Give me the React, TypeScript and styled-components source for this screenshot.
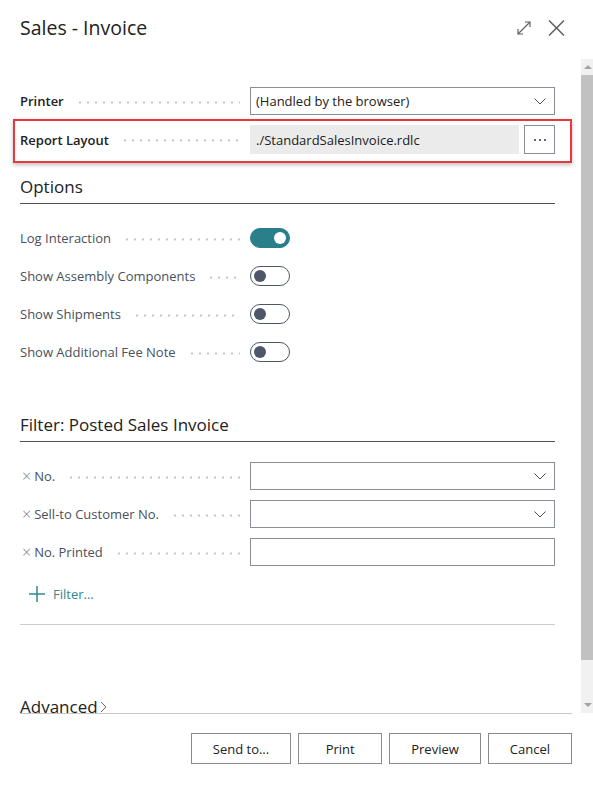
import React from 'react';
import styled, { createGlobalStyle, css } from 'styled-components';

const GlobalStyle = createGlobalStyle`
  html, body {
    margin: 0;
    padding: 0;
    background: #ffffff;
  }
  body {
    font-family: 'Open Sans', 'Noto Sans', sans-serif;
    color: #212121;
  }
`;

const Dialog = styled.div`
  width: 593px;
  height: 786px;
  display: flex;
  flex-direction: column;
  background: #ffffff;
  overflow: hidden;
`;

const Header = styled.header`
  height: 59px;
  box-sizing: border-box;
  padding: 16px 28px 0 20px;
  display: flex;
  align-items: flex-start;
  justify-content: space-between;
`;

const Title = styled.h1`
  margin: 0;
  font-size: 19.5px;
  line-height: 24px;
  font-weight: 400;
  color: #212121;
`;

const HeaderActions = styled.div`
  display: flex;
  align-items: center;
  gap: 16px;
  height: 24px;
`;

const IconButton = styled.button`
  border: 0;
  padding: 0;
  background: none;
  display: flex;
  align-items: center;
  justify-content: center;
  color: #616161;
`;

const Body = styled.div`
  height: 654px;
  display: flex;
  flex-shrink: 0;
`;

const ScrollContent = styled.div`
  flex: 1;
  overflow: hidden;
  box-sizing: border-box;
  padding: 28px 26px 0 20px;
`;

const Scrollbar = styled.div`
  width: 12px;
  background: #f1f1f1;
  display: flex;
  flex-direction: column;
`;

const ScrollArrow = styled.div<{ $down?: boolean }>`
  height: 16px;
  flex-shrink: 0;
  display: flex;
  align-items: center;
  justify-content: center;
  padding-left: 2px;

  &::before {
    content: '';
    border-left: 4px solid transparent;
    border-right: 4px solid transparent;
    ${({ $down }) =>
      $down
        ? css`border-top: 4px solid #a3a3a3;`
        : css`border-bottom: 4px solid #a3a3a3;`}
  }
`;

const ScrollThumb = styled.div`
  height: 585px;
  flex-shrink: 0;
  background: #c1c1c1;
`;

const ScrollTrack = styled.div`
  flex: 1;
`;

const FieldRow = styled.div<{ $highlight?: boolean }>`
  position: relative;
  display: grid;
  grid-template-columns: 230px 1fr;
  align-items: center;
  height: 28px;
  margin-bottom: 10px;

  ${({ $highlight }) =>
    $highlight &&
    css`
      &::after {
        content: '';
        position: absolute;
        top: -6px;
        bottom: -10px;
        left: -7px;
        right: -17px;
        border: 2px solid #e8383d;
        box-shadow: 0 2px 4px rgba(0, 0, 0, 0.25);
        pointer-events: none;
      }
    `}
`;

const Label = styled.div<{ $strong?: boolean }>`
  display: flex;
  align-items: center;
  font-size: 13px;
  white-space: nowrap;
  color: ${({ $strong }) => ($strong ? '#212121' : '#4a505c')};
  font-weight: ${({ $strong }) => ($strong ? 600 : 400)};
`;

const RemoveMark = styled.span`
  color: #7d828c;
  font-size: 16px;
  font-weight: 300;
  line-height: 1;
  margin: 0 3px 0 2px;
`;

const Leader = styled.span`
  flex: 1;
  height: 3px;
  margin: 2px 10px 0 12px;
  background: radial-gradient(circle, #c4c4c4 0.9px, transparent 1.3px) 0 50% / 8px 3px repeat-x;
`;

const Field = styled.div<{ $readOnly?: boolean }>`
  height: 28px;
  box-sizing: border-box;
  display: flex;
  align-items: center;
  padding: 0 8px 0 5px;
  font-size: 13px;
  color: #212121;

  & > svg {
    margin-left: auto;
  }

  ${({ $readOnly }) =>
    $readOnly
      ? css`
          background: #ebebeb;
          border: 1px solid #ebebeb;
        `
      : css`
          background: #ffffff;
          border: 1px solid #8a8e99;
        `}
`;

const FieldGroup = styled.div`
  display: flex;
  gap: 5px;
  height: 29px;

  & > ${Field} {
    flex: 1;
    height: 29px;
  }
`;

const MoreButton = styled.button`
  width: 31px;
  height: 29px;
  box-sizing: border-box;
  border: 1px solid #8a8e99;
  background: #ffffff;
  padding: 0;
  display: flex;
  align-items: center;
  justify-content: center;
  gap: 3px;

  span {
    width: 2px;
    height: 2px;
    border-radius: 50%;
    background: #333333;
  }
`;

const SectionHeading = styled.h2<{ $gap: number }>`
  margin: ${({ $gap }) => $gap}px 0 20px;
  padding-bottom: 4px;
  font-size: 17px;
  line-height: 24px;
  font-weight: 400;
  color: #212121;
  border-bottom: 1px solid #505050;
`;

const Toggle = styled.span<{ $on?: boolean }>`
  width: 40px;
  height: 20px;
  box-sizing: border-box;
  border-radius: 10px;
  display: flex;
  align-items: center;
  padding: 0 3px;
  justify-content: ${({ $on }) => ($on ? 'flex-end' : 'flex-start')};
  background: ${({ $on }) => ($on ? '#2a7f8a' : '#ffffff')};
  border: 1px solid ${({ $on }) => ($on ? '#2a7f8a' : '#4f5669')};

  &::before {
    content: '';
    width: 12px;
    height: 12px;
    border-radius: 50%;
    background: ${({ $on }) => ($on ? '#ffffff' : '#4f5669')};
  }
`;

const AddFilter = styled.div`
  display: flex;
  align-items: center;
  gap: 8px;
  height: 28px;
  margin: 14px 0 16px 9px;
  font-size: 13px;
  color: #2f8790;
`;

const Divider = styled.div`
  height: 1px;
  background: #c8ccd2;
`;

const Advanced = styled.div`
  margin-top: 70px;
  display: flex;
  align-items: center;
  gap: 2px;
  font-size: 17px;
  line-height: 24px;
  color: #212121;
`;

const Footer = styled.footer`
  flex: 1;
  margin: 0 21px 0 20px;
  border-top: 1px solid #c6c6c6;
  padding-top: 19px;
  display: flex;
  justify-content: flex-end;
  align-items: flex-start;
  gap: 7px;
`;

const ActionButton = styled.button`
  height: 31px;
  min-width: 84px;
  box-sizing: border-box;
  padding: 0 21px;
  border: 1px solid #8a8a8a;
  background: #ffffff;
  font-family: inherit;
  font-size: 13px;
  color: #212121;
`;

const Chevron = () => (
  <svg width="12" height="7" viewBox="0 0 12 7">
    <polyline points="0.5,0.5 6,6 11.5,0.5" fill="none" stroke="#505050" strokeWidth="1" />
  </svg>
);

const ExpandIcon = () => (
  <svg width="16" height="15" viewBox="0 0 16 15">
    <g fill="none" stroke="#616161" strokeWidth="1.2">
      <line x1="2" y1="13" x2="14" y2="1" />
      <polyline points="9,1 14,1 14,6" />
      <polyline points="2,8 2,13 7,13" />
    </g>
  </svg>
);

const CloseIcon = () => (
  <svg width="17" height="16" viewBox="0 0 17 16">
    <g stroke="#616161" strokeWidth="1.5">
      <line x1="1" y1="0.5" x2="16" y2="15.5" />
      <line x1="16" y1="0.5" x2="1" y2="15.5" />
    </g>
  </svg>
);

const PlusIcon = () => (
  <svg width="16" height="16" viewBox="0 0 16 16">
    <g stroke="#2f8790" strokeWidth="1.5">
      <line x1="8" y1="0" x2="8" y2="16" />
      <line x1="0" y1="8" x2="16" y2="8" />
    </g>
  </svg>
);

const AdvancedChevron = () => (
  <svg width="8" height="12" viewBox="0 0 8 12">
    <polyline points="1,1 6,6 1,11" fill="none" stroke="#6b6b6b" strokeWidth="1" />
  </svg>
);

const options = [
  { label: 'Log Interaction', on: true },
  { label: 'Show Assembly Components', on: false },
  { label: 'Show Shipments', on: false },
  { label: 'Show Additional Fee Note', on: false },
];

const filters = [
  { label: 'No.', lookup: true },
  { label: 'Sell-to Customer No.', lookup: true },
  { label: 'No. Printed', lookup: false },
];

export default function App() {
  return (
    <>
      <GlobalStyle />
      <Dialog>
        <Header>
          <Title>Sales - Invoice</Title>
          <HeaderActions>
            <IconButton aria-label="Expand">
              <ExpandIcon />
            </IconButton>
            <IconButton aria-label="Close">
              <CloseIcon />
            </IconButton>
          </HeaderActions>
        </Header>

        <Body>
          <ScrollContent>
            <FieldRow>
              <Label $strong>
                Printer
                <Leader />
              </Label>
              <Field>
                (Handled by the browser)
                <Chevron />
              </Field>
            </FieldRow>
            <FieldRow $highlight>
              <Label $strong>
                Report Layout
                <Leader />
              </Label>
              <FieldGroup>
                <Field $readOnly>./StandardSalesInvoice.rdlc</Field>
                <MoreButton aria-label="More">
                  <span />
                  <span />
                  <span />
                </MoreButton>
              </FieldGroup>
            </FieldRow>

            <SectionHeading $gap={22}>Options</SectionHeading>
            {options.map((o) => (
              <FieldRow key={o.label}>
                <Label>
                  {o.label}
                  <Leader />
                </Label>
                <Toggle $on={o.on} />
              </FieldRow>
            ))}

            <SectionHeading $gap={47}>Filter: Posted Sales Invoice</SectionHeading>
            {filters.map((f) => (
              <FieldRow key={f.label}>
                <Label>
                  <RemoveMark>×</RemoveMark>
                  {f.label}
                  <Leader />
                </Label>
                <Field>{f.lookup && <Chevron />}</Field>
              </FieldRow>
            ))}
            <AddFilter>
              <PlusIcon />
              Filter...
            </AddFilter>
            <Divider />

            <Advanced>
              Advanced
              <AdvancedChevron />
            </Advanced>
          </ScrollContent>

          <Scrollbar>
            <ScrollArrow />
            <ScrollThumb />
            <ScrollTrack />
            <ScrollArrow $down />
          </Scrollbar>
        </Body>

        <Footer>
          <ActionButton>Send to...</ActionButton>
          <ActionButton>Print</ActionButton>
          <ActionButton>Preview</ActionButton>
          <ActionButton>Cancel</ActionButton>
        </Footer>
      </Dialog>
    </>
  );
}
